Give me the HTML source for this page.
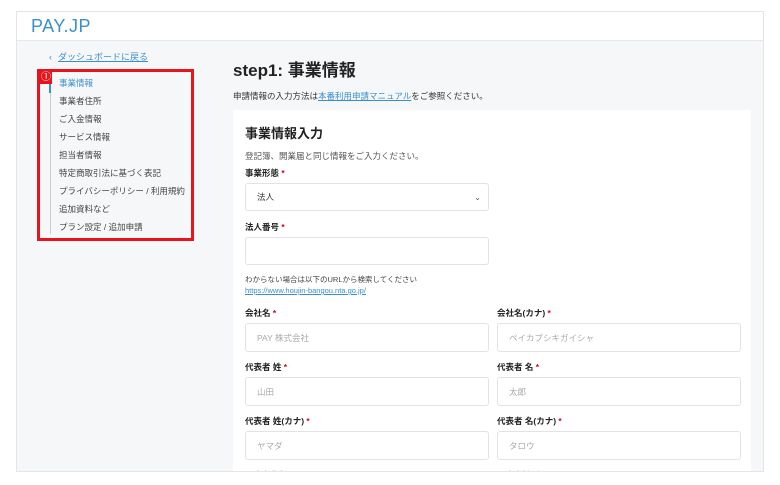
<!DOCTYPE html><html><head><meta charset="utf-8"><style>
*{box-sizing:border-box;margin:0;padding:0}
body{width:780px;height:485px;background:#fff;font-family:"Liberation Sans","Noto Sans CJK JP",sans-serif;color:#333;position:relative;overflow:hidden}
.frame{position:absolute;left:16px;top:11px;width:748px;height:461px;border:1px solid #e3e5e8;background:#f6f7f9;overflow:hidden}
.hdr{position:absolute;left:0;top:0;right:0;height:29px;background:#fff;border-bottom:1px solid #e6e8eb}
.logo{position:absolute;left:14px;top:4px;font-size:18px;color:#3a8fd0;letter-spacing:.5px;font-weight:300}
.a{position:absolute;white-space:nowrap}
.back{left:32px;top:38px;font-size:9px;color:#3a8fd0}
.back span{text-decoration:underline;margin-left:6px}
.red{position:absolute;left:20px;top:57px;width:157px;height:172px;border:3px solid #e8141c}
.badge{position:absolute;left:0;top:0;width:12px;height:12px;background:#e8141c;color:#fff;font-size:10px;text-align:center;line-height:12px}
.vl{position:absolute;left:33px;top:72px;width:1px;height:150px;background:#ccc}
.vl2{position:absolute;left:32px;top:72px;width:2px;height:9px;background:#3a8fd0}
.nav{left:42px;font-size:8.5px;color:#444}
.t{left:216px;top:44px;font-size:17px;font-weight:bold;color:#222}
.s{left:216px;top:78px;font-size:8.5px;color:#333}
.s u{color:#3a8fd0}
.card{position:absolute;left:216px;top:98px;width:518px;height:380px;background:#fff}
.lb{font-size:8.5px;font-weight:bold;color:#222}
.lb b{color:#d0021b}
.in{position:absolute;border:1px solid #e1e3e6;border-radius:3px;background:#fff;font-size:8.5px;color:#aaa;padding-left:11px;display:flex;align-items:center}
</style></head><body>
<div class="frame">
<div class="hdr"><div class="logo">PAY.JP</div></div>
<div class="a back">‹<span>ダッシュボードに戻る</span></div>
<div class="vl"></div><div class="vl2"></div>
<div class="a nav" style="top:65px;color:#3a8fd0">事業情報</div>
<div class="a nav" style="top:83px">事業者住所</div>
<div class="a nav" style="top:101px">ご入金情報</div>
<div class="a nav" style="top:119px">サービス情報</div>
<div class="a nav" style="top:137px">担当者情報</div>
<div class="a nav" style="top:155px">特定商取引法に基づく表記</div>
<div class="a nav" style="top:173px">プライバシーポリシー / 利用規約</div>
<div class="a nav" style="top:191px">追加資料など</div>
<div class="a nav" style="top:209px">プラン設定 / 追加申請</div>
<div class="red"><div class="badge">①</div></div>
<div class="a t">step1: 事業情報</div>
<div class="a s">申請情報の入力方法は<u>本番利用申請マニュアル</u>をご参照ください。</div>
<div class="card">
<div class="a" style="left:12px;top:13px;font-size:13px;font-weight:bold;color:#222">事業情報入力</div>
<div class="a" style="left:12px;top:40px;font-size:8.5px;color:#555">登記簿、開業届と同じ情報をご入力ください。</div>
<div class="a lb" style="left:12px;top:57px">事業形態 <b>*</b></div>
<div class="in" style="left:12px;top:73px;width:244px;height:28px;color:#333">法人<span style="position:absolute;right:7px;font-size:8px;color:#555">⌄</span></div>
<div class="a lb" style="left:12px;top:111px">法人番号 <b>*</b></div>
<div class="in" style="left:12px;top:127px;width:244px;height:28px"></div>
<div class="a" style="left:12px;top:164px;font-size:7.5px;color:#444">わからない場合は以下のURLから検索してください</div>
<div class="a" style="left:12px;top:176px;font-size:7.5px;color:#3a8fd0;text-decoration:underline">https://www.houjin-bangou.nta.go.jp/</div>
<div class="a lb" style="left:12px;top:197px">会社名 <b>*</b></div>
<div class="a lb" style="left:264px;top:197px">会社名(カナ) <b>*</b></div>
<div class="in" style="left:12px;top:213px;width:244px;height:29px">PAY 株式会社</div>
<div class="in" style="left:264px;top:213px;width:244px;height:29px">ペイカブシキガイシャ</div>
<div class="a lb" style="left:12px;top:251px">代表者 姓 <b>*</b></div>
<div class="a lb" style="left:264px;top:251px">代表者 名 <b>*</b></div>
<div class="in" style="left:12px;top:267px;width:244px;height:29px">山田</div>
<div class="in" style="left:264px;top:267px;width:244px;height:29px">太郎</div>
<div class="a lb" style="left:12px;top:305px">代表者 姓(カナ) <b>*</b></div>
<div class="a lb" style="left:264px;top:305px">代表者 名(カナ) <b>*</b></div>
<div class="in" style="left:12px;top:321px;width:244px;height:29px">ヤマダ</div>
<div class="in" style="left:264px;top:321px;width:244px;height:29px">タロウ</div>
<div class="a lb" style="left:12px;top:359px;color:#999">代表者生年月日</div>
<div class="a lb" style="left:264px;top:359px;color:#999">代表者性別</div>
</div>
</div>
</body></html>
